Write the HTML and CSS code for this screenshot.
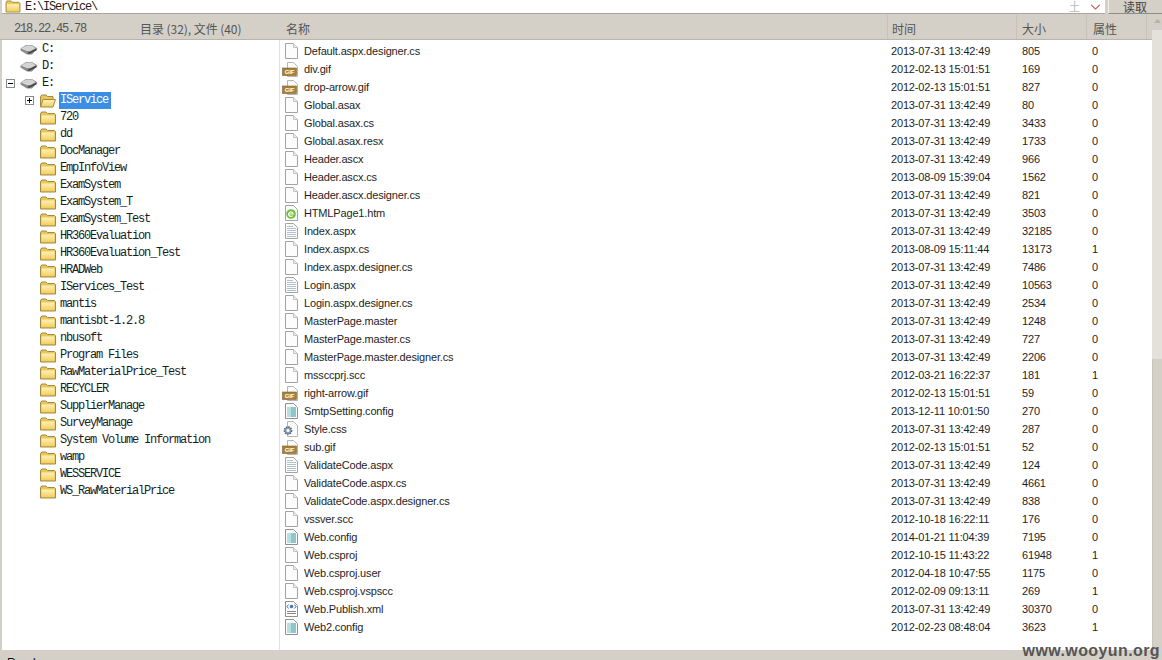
FILE: index.html
```html
<!DOCTYPE html>
<html lang="zh-CN">
<head>
<meta charset="utf-8">
<title>IService</title>
<link rel="stylesheet" href="styles.css">
</head>
<body>
<svg class="defs" width="0" height="0" aria-hidden="true">
  <defs>
    <linearGradient id="folder-fill" x1="0" y1="0" x2="0" y2="1">
      <stop offset="0" stop-color="#fff2b8"/>
      <stop offset="1" stop-color="#f3cf5e"/>
    </linearGradient>
    <symbol id="folder" viewBox="0 0 16 14">
      <path d="M.5 3 L1.5 1 H6 L7.5 2.5 H14.5 L15.5 3.5 V13 H.5Z" fill="#e9c659" stroke="#a08a45"/>
      <path d="M1.5 4.5 H14.5 V12 H1.5Z" fill="url(#folder-fill)"/>
    </symbol>
    <symbol id="folder-open" viewBox="0 0 16 14">
      <path d="M.5 13 V3 L1.5 1 H6 L7.5 2.5 H13 V5" fill="#e9c659" stroke="#a08a45"/>
      <path d="M.5 13 L3 5.5 H15.5 L13 13Z" fill="url(#folder-fill)" stroke="#a08a45"/>
    </symbol>
    <symbol id="drive" viewBox="0 0 18 12">
      <path d="M.5 4.5 L6 1 H12 L17.5 4.5 L12 10.5 H7 L.5 6.5Z" fill="#8a8a8a"/>
      <path d="M1 4.5 L6.5 1.5 H12 L15.5 4.2 L10.5 7 H6.5Z" fill="#d4d4d4"/>
      <path d="M8 9.5 L16.5 5.5" stroke="#444" stroke-width="1.4"/>
    </symbol>
    <symbol id="f-blank" viewBox="0 0 17 16">
      <path d="M3.5 .5 H11.5 L15.5 4.5 V15.5 H3.5Z" fill="#fcfcfc" stroke="#a3a3a3"/>
      <path d="M11.5 .5 V4.5 H15.5" fill="#eee" stroke="#c2c2c2"/>
    </symbol>
    <symbol id="f-text" viewBox="0 0 17 16">
      <path d="M3.5 .5 H11.5 L15.5 4.5 V15.5 H3.5Z" fill="#fcfcfc" stroke="#a3a3a3"/>
      <path d="M5 3.5 H11 M5 5.5 H14 M5 7.5 H14 M5 9.5 H14 M5 11.5 H14 M5 13.5 H14" stroke="#b4c0cf"/>
    </symbol>
    <symbol id="f-gif" viewBox="0 0 17 16">
      <path d="M5.5 1.5 H11.5 L15.5 5.5 V15.5 H5.5Z" fill="#fcfcfc" stroke="#b5b5b5"/>
      <rect x=".5" y="7" width="14" height="7.5" fill="#a5803a" stroke="#7d6128" stroke-width=".6"/>
      <text class="gif-label" x="7.5" y="13.2" text-anchor="middle">GIF</text>
    </symbol>
    <symbol id="f-html" viewBox="0 0 17 16">
      <path d="M3.5 .5 H11.5 L15.5 4.5 V15.5 H3.5Z" fill="#fcfcfc" stroke="#a3a3a3"/>
      <circle cx="9" cy="9" r="4.8" fill="#6fbf3a"/>
      <path d="M7 9 H11.2 A2.3 2.3 0 1 0 10.6 10.7" fill="none" stroke="#fff" stroke-width="1.2"/>
    </symbol>
    <symbol id="f-config" viewBox="0 0 17 16">
      <path d="M3.5 .5 H11.5 L15.5 4.5 V15.5 H3.5Z" fill="#fcfcfc" stroke="#8f8f8f"/>
      <rect x="5" y="4" width="9" height="10" fill="#8ec6cc"/>
      <rect x="5" y="4" width="4" height="10" fill="#b7dfe0"/>
    </symbol>
    <symbol id="f-css" viewBox="0 0 17 16">
      <path d="M5.5 .5 H11.5 L15.5 4.5 V15.5 H5.5Z" fill="#fcfcfc" stroke="#b5b5b5"/>
      <circle cx="6" cy="9.5" r="3.6" fill="#8da0b8" stroke="#55667e" stroke-width="1.6" stroke-dasharray="1.4 1"/>
      <circle cx="6" cy="9.5" r="1.5" fill="#fff"/>
    </symbol>
    <symbol id="f-xml" viewBox="0 0 17 16">
      <path d="M3.5 .5 H11.5 L15.5 4.5 V15.5 H3.5Z" fill="#fcfcfc" stroke="#8f8f8f"/>
      <circle cx="9.5" cy="5.5" r="1.8" fill="#3f78b8"/>
      <path d="M6.5 3.5 L5 5.5 L6.5 7.5 M12.5 3.5 L14 5.5 L12.5 7.5" fill="none" stroke="#3f6f9f"/>
      <path d="M5 10.5 H14 M5 12.5 H14" stroke="#8a8a8a"/>
    </symbol>
  </defs>
</svg>

<div class="app">
  <div class="address">
    <div class="address-field">
      <svg class="address-icon"><use href="#folder"/></svg>
      <span class="mono path">E:\IService\</span>
      <span class="spacer"></span>
      <span class="add-mark">土</span>
      <svg class="chevron" viewBox="0 0 12 7"><path d="M1 1 L6 6 L11 1" fill="none" stroke="#c0504d" stroke-width="1.2"/></svg>
    </div>
    <div class="read-button">读取</div>
  </div>

  <div class="workspace">
    <div class="panes">
      <div class="header">
        <div class="header-info">
          <span class="host mono">218.22.45.78</span>
          <span class="count">目录 (32), 文件 (40)</span>
        </div>
        <div class="columns">
          <div class="col">名称</div>
          <div class="col col-time">时间</div>
          <div class="col">大小</div>
          <div class="col col-attr">属性</div>
        </div>
      </div>
      <div class="body">
        <div class="tree mono">
          <div class="node"><span class="box"></span><svg class="ico-drive"><use href="#drive"/></svg><span class="label">C:</span></div>
          <div class="node"><span class="box"></span><svg class="ico-drive"><use href="#drive"/></svg><span class="label">D:</span></div>
          <div class="node"><span class="box minus"></span><svg class="ico-drive"><use href="#drive"/></svg><span class="label">E:</span></div>
          <div class="node sub"><span class="box plus"></span><svg class="ico-folder"><use href="#folder-open"/></svg><span class="label selected">IService</span></div>
          <div class="node sub"><span class="box"></span><svg class="ico-folder"><use href="#folder"/></svg><span class="label">720</span></div>
          <div class="node sub"><span class="box"></span><svg class="ico-folder"><use href="#folder"/></svg><span class="label">dd</span></div>
          <div class="node sub"><span class="box"></span><svg class="ico-folder"><use href="#folder"/></svg><span class="label">DocManager</span></div>
          <div class="node sub"><span class="box"></span><svg class="ico-folder"><use href="#folder"/></svg><span class="label">EmpInfoView</span></div>
          <div class="node sub"><span class="box"></span><svg class="ico-folder"><use href="#folder"/></svg><span class="label">ExamSystem</span></div>
          <div class="node sub"><span class="box"></span><svg class="ico-folder"><use href="#folder"/></svg><span class="label">ExamSystem_T</span></div>
          <div class="node sub"><span class="box"></span><svg class="ico-folder"><use href="#folder"/></svg><span class="label">ExamSystem_Test</span></div>
          <div class="node sub"><span class="box"></span><svg class="ico-folder"><use href="#folder"/></svg><span class="label">HR360Evaluation</span></div>
          <div class="node sub"><span class="box"></span><svg class="ico-folder"><use href="#folder"/></svg><span class="label">HR360Evaluation_Test</span></div>
          <div class="node sub"><span class="box"></span><svg class="ico-folder"><use href="#folder"/></svg><span class="label">HRADWeb</span></div>
          <div class="node sub"><span class="box"></span><svg class="ico-folder"><use href="#folder"/></svg><span class="label">IServices_Test</span></div>
          <div class="node sub"><span class="box"></span><svg class="ico-folder"><use href="#folder"/></svg><span class="label">mantis</span></div>
          <div class="node sub"><span class="box"></span><svg class="ico-folder"><use href="#folder"/></svg><span class="label">mantisbt-1.2.8</span></div>
          <div class="node sub"><span class="box"></span><svg class="ico-folder"><use href="#folder"/></svg><span class="label">nbusoft</span></div>
          <div class="node sub"><span class="box"></span><svg class="ico-folder"><use href="#folder"/></svg><span class="label">Program Files</span></div>
          <div class="node sub"><span class="box"></span><svg class="ico-folder"><use href="#folder"/></svg><span class="label">RawMaterialPrice_Test</span></div>
          <div class="node sub"><span class="box"></span><svg class="ico-folder"><use href="#folder"/></svg><span class="label">RECYCLER</span></div>
          <div class="node sub"><span class="box"></span><svg class="ico-folder"><use href="#folder"/></svg><span class="label">SupplierManage</span></div>
          <div class="node sub"><span class="box"></span><svg class="ico-folder"><use href="#folder"/></svg><span class="label">SurveyManage</span></div>
          <div class="node sub"><span class="box"></span><svg class="ico-folder"><use href="#folder"/></svg><span class="label">System Volume Information</span></div>
          <div class="node sub"><span class="box"></span><svg class="ico-folder"><use href="#folder"/></svg><span class="label">wamp</span></div>
          <div class="node sub"><span class="box"></span><svg class="ico-folder"><use href="#folder"/></svg><span class="label">WESSERVICE</span></div>
          <div class="node sub"><span class="box"></span><svg class="ico-folder"><use href="#folder"/></svg><span class="label">WS_RawMaterialPrice</span></div>
        </div>
        <div class="files">
          <div class="file"><svg class="ico-file"><use href="#f-blank"/></svg><span>Default.aspx.designer.cs</span><span>2013-07-31 13:42:49</span><span>805</span><span>0</span></div>
          <div class="file"><svg class="ico-file"><use href="#f-gif"/></svg><span>div.gif</span><span>2012-02-13 15:01:51</span><span>169</span><span>0</span></div>
          <div class="file"><svg class="ico-file"><use href="#f-gif"/></svg><span>drop-arrow.gif</span><span>2012-02-13 15:01:51</span><span>827</span><span>0</span></div>
          <div class="file"><svg class="ico-file"><use href="#f-blank"/></svg><span>Global.asax</span><span>2013-07-31 13:42:49</span><span>80</span><span>0</span></div>
          <div class="file"><svg class="ico-file"><use href="#f-blank"/></svg><span>Global.asax.cs</span><span>2013-07-31 13:42:49</span><span>3433</span><span>0</span></div>
          <div class="file"><svg class="ico-file"><use href="#f-blank"/></svg><span>Global.asax.resx</span><span>2013-07-31 13:42:49</span><span>1733</span><span>0</span></div>
          <div class="file"><svg class="ico-file"><use href="#f-blank"/></svg><span>Header.ascx</span><span>2013-07-31 13:42:49</span><span>966</span><span>0</span></div>
          <div class="file"><svg class="ico-file"><use href="#f-blank"/></svg><span>Header.ascx.cs</span><span>2013-08-09 15:39:04</span><span>1562</span><span>0</span></div>
          <div class="file"><svg class="ico-file"><use href="#f-blank"/></svg><span>Header.ascx.designer.cs</span><span>2013-07-31 13:42:49</span><span>821</span><span>0</span></div>
          <div class="file"><svg class="ico-file"><use href="#f-html"/></svg><span>HTMLPage1.htm</span><span>2013-07-31 13:42:49</span><span>3503</span><span>0</span></div>
          <div class="file"><svg class="ico-file"><use href="#f-text"/></svg><span>Index.aspx</span><span>2013-07-31 13:42:49</span><span>32185</span><span>0</span></div>
          <div class="file"><svg class="ico-file"><use href="#f-blank"/></svg><span>Index.aspx.cs</span><span>2013-08-09 15:11:44</span><span>13173</span><span>1</span></div>
          <div class="file"><svg class="ico-file"><use href="#f-blank"/></svg><span>Index.aspx.designer.cs</span><span>2013-07-31 13:42:49</span><span>7486</span><span>0</span></div>
          <div class="file"><svg class="ico-file"><use href="#f-text"/></svg><span>Login.aspx</span><span>2013-07-31 13:42:49</span><span>10563</span><span>0</span></div>
          <div class="file"><svg class="ico-file"><use href="#f-blank"/></svg><span>Login.aspx.designer.cs</span><span>2013-07-31 13:42:49</span><span>2534</span><span>0</span></div>
          <div class="file"><svg class="ico-file"><use href="#f-blank"/></svg><span>MasterPage.master</span><span>2013-07-31 13:42:49</span><span>1248</span><span>0</span></div>
          <div class="file"><svg class="ico-file"><use href="#f-blank"/></svg><span>MasterPage.master.cs</span><span>2013-07-31 13:42:49</span><span>727</span><span>0</span></div>
          <div class="file"><svg class="ico-file"><use href="#f-blank"/></svg><span>MasterPage.master.designer.cs</span><span>2013-07-31 13:42:49</span><span>2206</span><span>0</span></div>
          <div class="file"><svg class="ico-file"><use href="#f-blank"/></svg><span>mssccprj.scc</span><span>2012-03-21 16:22:37</span><span>181</span><span>1</span></div>
          <div class="file"><svg class="ico-file"><use href="#f-gif"/></svg><span>right-arrow.gif</span><span>2012-02-13 15:01:51</span><span>59</span><span>0</span></div>
          <div class="file"><svg class="ico-file"><use href="#f-config"/></svg><span>SmtpSetting.config</span><span>2013-12-11 10:01:50</span><span>270</span><span>0</span></div>
          <div class="file"><svg class="ico-file"><use href="#f-css"/></svg><span>Style.css</span><span>2013-07-31 13:42:49</span><span>287</span><span>0</span></div>
          <div class="file"><svg class="ico-file"><use href="#f-gif"/></svg><span>sub.gif</span><span>2012-02-13 15:01:51</span><span>52</span><span>0</span></div>
          <div class="file"><svg class="ico-file"><use href="#f-text"/></svg><span>ValidateCode.aspx</span><span>2013-07-31 13:42:49</span><span>124</span><span>0</span></div>
          <div class="file"><svg class="ico-file"><use href="#f-blank"/></svg><span>ValidateCode.aspx.cs</span><span>2013-07-31 13:42:49</span><span>4661</span><span>0</span></div>
          <div class="file"><svg class="ico-file"><use href="#f-blank"/></svg><span>ValidateCode.aspx.designer.cs</span><span>2013-07-31 13:42:49</span><span>838</span><span>0</span></div>
          <div class="file"><svg class="ico-file"><use href="#f-blank"/></svg><span>vssver.scc</span><span>2012-10-18 16:22:11</span><span>176</span><span>0</span></div>
          <div class="file"><svg class="ico-file"><use href="#f-config"/></svg><span>Web.config</span><span>2014-01-21 11:04:39</span><span>7195</span><span>0</span></div>
          <div class="file"><svg class="ico-file"><use href="#f-blank"/></svg><span>Web.csproj</span><span>2012-10-15 11:43:22</span><span>61948</span><span>1</span></div>
          <div class="file"><svg class="ico-file"><use href="#f-blank"/></svg><span>Web.csproj.user</span><span>2012-04-18 10:47:55</span><span>1175</span><span>0</span></div>
          <div class="file"><svg class="ico-file"><use href="#f-blank"/></svg><span>Web.csproj.vspscc</span><span>2012-02-09 09:13:11</span><span>269</span><span>1</span></div>
          <div class="file"><svg class="ico-file"><use href="#f-xml"/></svg><span>Web.Publish.xml</span><span>2013-07-31 13:42:49</span><span>30370</span><span>0</span></div>
          <div class="file"><svg class="ico-file"><use href="#f-config"/></svg><span>Web2.config</span><span>2012-02-23 08:48:04</span><span>3623</span><span>1</span></div>
        </div>
      </div>
    </div>
    <div class="scrollbar">
      <div class="scroll-up"><svg class="scroll-arrow" viewBox="0 0 7 4"><path d="M0 4 L3.5 0 L7 4Z" fill="#b5b1a8"/></svg></div>
      <div class="scroll-track"></div>
      <div class="scroll-thumb"></div>
    </div>
  </div>

  <div class="status">Ready</div>
</div>
<div class="watermark">www.wooyun.org</div>
</body>
</html>
```

FILE: styles.css
```css
* { box-sizing: border-box; }

html, body {
  margin: 0;
  height: 100%;
  overflow: hidden;
}

body {
  background: #d4d0c8;
  color: #222;
  font-family: "Liberation Sans", Arial, "Noto Sans CJK SC", sans-serif;
  font-size: 11px;
  letter-spacing: -0.16px;
}

.defs { position: absolute; }

.gif-label {
  fill: #fff;
  font: bold 6px "Liberation Sans", sans-serif;
}

.mono {
  font-family: "Liberation Mono", "Noto Sans CJK SC", monospace;
  font-size: 12px;
  letter-spacing: -1.2px;
}

.app {
  display: flex;
  flex-direction: column;
  width: 1162px;
  height: 660px;
}

/* address bar */
.address {
  display: flex;
  flex: none;
  height: 15px;
  padding-left: 2px;
  background: #d4d0c8;
  overflow: hidden;
}

.address-field {
  display: flex;
  align-items: center;
  width: 1103px;
  height: 14px;
  padding-left: 3px;
  background: #fff;
  border-bottom: 1px solid #aaa69d;
}

.address-icon {
  flex: none;
  width: 16px;
  height: 13px;
  margin-right: 4px;
}

.path { padding-top: 1px; }

.spacer { flex: 1; }

.add-mark {
  margin-right: 10px;
  color: #b9b9b9;
  font-family: "Noto Sans CJK SC", sans-serif;
  font-size: 11px;
  letter-spacing: 0;
  line-height: 13px;
}

.chevron {
  flex: none;
  width: 11px;
  height: 6px;
  margin-right: 4px;
}

.read-button {
  flex: 1;
  margin-left: 3px;
  padding-left: 14px;
  height: 14px;
  border-left: 1px solid #f1efea;
  border-bottom: 1px solid #8f8c85;
  color: #444;
  font-family: "Noto Sans CJK SC", sans-serif;
  font-size: 12px;
  letter-spacing: 0;
  line-height: 13px;
}

/* main area */
.workspace {
  display: flex;
  flex: 1;
  min-height: 0;
}

.panes {
  display: flex;
  flex-direction: column;
  flex: 1;
  min-width: 0;
}

.header {
  display: flex;
  flex: none;
  height: 25px;
  border-bottom: 1px solid #b9b5ac;
  font-family: "Noto Sans CJK SC", sans-serif;
  font-size: 12px;
  letter-spacing: 0;
  color: #555;
}

.header-info {
  display: flex;
  align-items: center;
  flex: none;
  width: 281px;
  padding: 3px 0 0 14px;
  line-height: 14px;
}

.host {
  width: 126px;
  color: #555;
}

.count {
  white-space: nowrap;
  letter-spacing: -0.05px;
}

.columns {
  display: grid;
  flex: 1;
  grid-template-columns: 607px 129px 70px 60px;
}

.col {
  padding: 6px 0 0 5px;
  line-height: 16px;
  border-right: 1px solid #c6c2ba;
  height: 24px;
}

.col-time { padding-left: 4px; }
.col-attr { padding-left: 6px; }

.body {
  display: flex;
  flex: 1;
  min-height: 0;
  margin-left: 2px;
  background: #fff;
}

.tree {
  flex: none;
  width: 278px;
  padding-top: 1px;
  border-right: 1px solid #e3e0da;
  color: #1c1c1c;
}

.node {
  display: flex;
  align-items: center;
  height: 17px;
  padding-left: 4px;
  white-space: pre;
}

.node.sub { padding-left: 23px; }

.box {
  flex: none;
  width: 9px;
  height: 9px;
  margin-right: 5px;
}

.sub .box { margin-right: 6px; }

.box.minus,
.box.plus {
  border: 1px solid #8a8a8a;
  background: linear-gradient(#000, #000) center / 5px 1px no-repeat, #fff;
}

.box.plus {
  background:
    linear-gradient(#000, #000) center / 5px 1px no-repeat,
    linear-gradient(#000, #000) center / 1px 5px no-repeat,
    #fff;
}

.ico-drive {
  flex: none;
  width: 18px;
  height: 12px;
  margin-right: 2px;
}

.ico-folder {
  flex: none;
  width: 16px;
  height: 14px;
  margin-right: 2px;
}

.label {
  padding: 0 2px;
  line-height: 17px;
}

.selected {
  background: #3a8ee6;
  color: #fff;
  padding: 0 3px 0 1px;
  margin-left: 1px;
}

.files {
  flex: 1;
  min-width: 0;
  padding: 2px 0 0 2px;
}

.file {
  display: grid;
  grid-template-columns: 22px 587px 131px 70px 60px;
  align-items: center;
  height: 18px;
  color: #1e1e1e;
  white-space: nowrap;
}

.ico-file {
  width: 17px;
  height: 16px;
}

/* scrollbar */
.scrollbar {
  display: flex;
  flex-direction: column;
  flex: none;
  width: 10px;
}

.scroll-up {
  display: flex;
  justify-content: center;
  flex: none;
  height: 15px;
  padding-top: 4px;
}

.scroll-arrow {
  width: 7px;
  height: 4px;
}

.scroll-track {
  flex: none;
  height: 329px;
  background: #e4e1db;
}

.scroll-thumb {
  flex: 1;
  background: #d4d0c8;
  border-left: 1px solid #c8c4bc;
}

/* status bar */
.status {
  flex: none;
  height: 10px;
  padding: 6px 0 0 7px;
  overflow: hidden;
  color: #111;
  font-size: 12px;
  letter-spacing: 0;
  line-height: 14px;
}

.watermark {
  position: absolute;
  right: 2px;
  bottom: 1px;
  color: #555;
  font: bold 16px/17px "Liberation Sans", sans-serif;
  letter-spacing: .4px;
}
```
